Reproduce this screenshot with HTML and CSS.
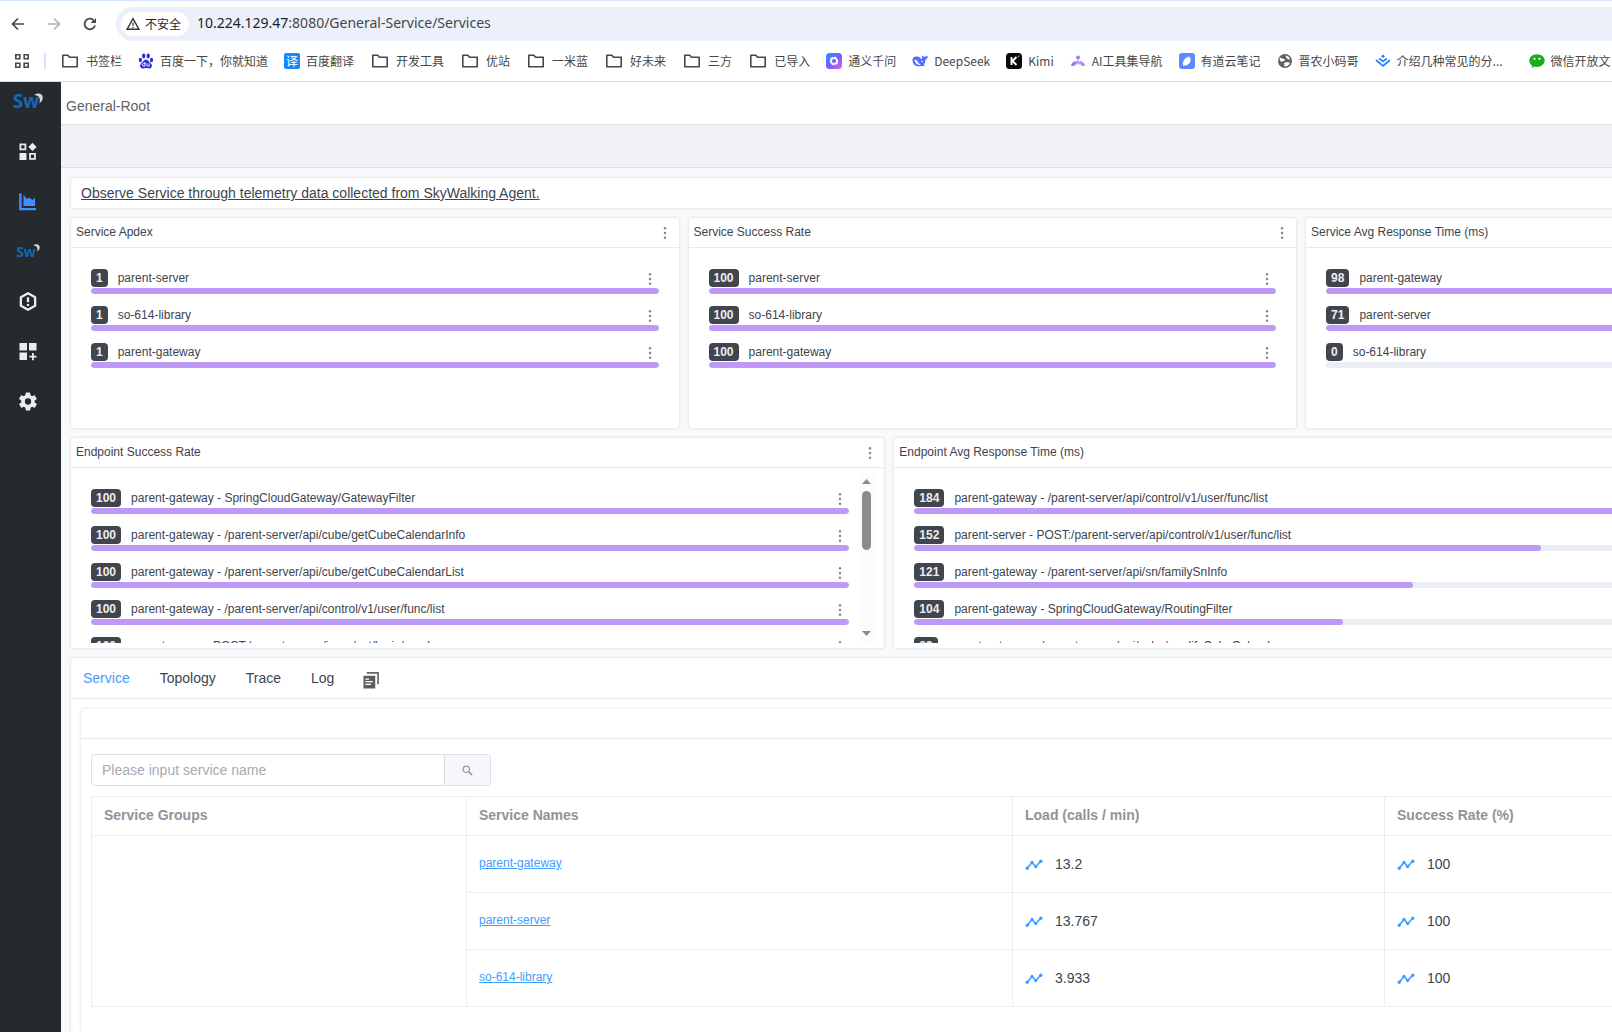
FILE: index.html
```html
<!DOCTYPE html>
<html lang="zh-CN">
<head>
<meta charset="utf-8">
<title>General-Root</title>
<link rel="stylesheet" href="styles.css">
</head>
<body>
<svg class="defs" aria-hidden="true">
  <symbol id="folder" viewBox="0 0 20 20"><path d="M2.800 4.200h5l1.700 2h7.700v9.600H2.800z" fill="none" stroke="#474747" stroke-width="1.600" stroke-linejoin="round"/></symbol>
  <symbol id="dots" viewBox="0 0 16 16"><g fill="#85888e"><circle cx="8" cy="2.600" r="1.400"/><circle cx="8" cy="8" r="1.400"/><circle cx="8" cy="13.400" r="1.400"/></g></symbol>
  <symbol id="line" viewBox="0 0 18 18"><path d="M2 13.500L7 7.500l3.700 4L16 6" fill="none" stroke="#409eff" stroke-width="1.700"/><g fill="#409eff"><circle cx="2.200" cy="13.200" r="1.700"/><circle cx="7" cy="7.400" r="1.600"/><circle cx="10.700" cy="11.600" r="1.600"/><circle cx="15.800" cy="6.200" r="1.700"/></g></symbol>
  <symbol id="moon" viewBox="0 0 10 12"><path d="M0 2.200C4-1 9.500 0 9.800 5c0 3-1.800 5-4 6.500C7.500 7 6.500 2.500 0 2.200z" fill="#d9dadb"/></symbol>
</svg>

<header class="browser">
  <div class="toolbar">
    <button class="nav-btn" aria-label="Back"><svg width="16" height="16" viewBox="0 0 16 16"><path d="M14 8H3M8 2.500L2.500 8 8 13.500" fill="none" stroke="#474747" stroke-width="1.700"/></svg></button>
    <button class="nav-btn" aria-label="Forward"><svg width="16" height="16" viewBox="0 0 16 16"><path d="M2 8h11M8 2.500L13.500 8 8 13.500" fill="none" stroke="#b5b5b5" stroke-width="1.700"/></svg></button>
    <button class="nav-btn" aria-label="Reload"><svg width="16" height="16" viewBox="0 0 16 16"><path d="M13 9.500A5.300 5.300 0 1 1 12.300 5" fill="none" stroke="#474747" stroke-width="1.800"/><path d="M14 1.500v5.500H8.500l2-2 1.800-.2z" fill="#474747"/></svg></button>
    <div class="address">
      <span class="insecure"><svg width="14" height="14" viewBox="0 0 14 14"><path d="M7 1.700L13 12.300H1z" fill="none" stroke="#333" stroke-width="1.400"/><path d="M7 5.500v3.300M7 9.800v1.200" stroke="#333" stroke-width="1.300"/></svg>不安全</span>
      <span class="url"><b>10.224.129.47</b>:8080/General-Service/Services</span>
    </div>
  </div>
  <nav class="bookmarks">
    <button class="apps" aria-label="Apps"><svg width="14" height="14" viewBox="0 0 14 14"><g fill="none" stroke="#474747" stroke-width="1.600"><path d="M.8.8h4v4h-4zM9.200.8h4v4h-4zM.8 9.200h4v4h-4zM9.200 9.200h4v4h-4z"/></g></svg></button>
    <span class="divider"></span>
    <a href="#"><svg class="folder"><use href="#folder"/></svg>书签栏</a>
    <a href="#"><svg class="fav" viewBox="0 0 16 16"><g fill="#2c2fd8"><ellipse cx="2.400" cy="7" rx="1.600" ry="2.200"/><ellipse cx="5.700" cy="3" rx="1.700" ry="2.400"/><ellipse cx="10.200" cy="3" rx="1.700" ry="2.400"/><ellipse cx="13.500" cy="7" rx="1.600" ry="2.200"/><path d="M8 6.500c2 0 3 2.500 5 4 2 2.500.5 5-2 5-1.500 0-2-.4-3-.4s-1.500.4-3 .4c-2.500 0-4-2.500-2-5 2-1.500 3-4 5-4z"/></g><path d="M7 9v4H5.500a1.200 1.200 0 0 1 0-2.400H7M9 10.300v2.200q0 .6.700.6h1.500v-2.800" fill="none" stroke="#fff" stroke-width=".9"/></svg>百度一下，你就知道</a>
    <a href="#"><span class="fav yi">译</span>百度翻译</a>
    <a href="#"><svg class="folder"><use href="#folder"/></svg>开发工具</a>
    <a href="#"><svg class="folder"><use href="#folder"/></svg>优站</a>
    <a href="#"><svg class="folder"><use href="#folder"/></svg>一米蓝</a>
    <a href="#"><svg class="folder"><use href="#folder"/></svg>好未来</a>
    <a href="#"><svg class="folder"><use href="#folder"/></svg>三方</a>
    <a href="#"><svg class="folder"><use href="#folder"/></svg>已导入</a>
    <a href="#"><svg class="fav" viewBox="0 0 16 16"><defs><linearGradient id="ty" x1="0" y1="0" x2="1" y2="1"><stop offset="0" stop-color="#1f97ff"/><stop offset=".55" stop-color="#7a5cff"/><stop offset="1" stop-color="#e565f5"/></linearGradient></defs><rect width="16" height="16" rx="3.500" fill="url(#ty)"/><path d="M8 4.500l3 1.700v3.600l-3 1.700-3-1.700V6.200z" fill="none" stroke="#fff" stroke-width="2.200" stroke-dasharray="3 .5"/></svg>通义千问</a>
    <a href="#"><svg class="fav" viewBox="0 0 16 16"><path d="M.5 7C.5 4 3 3 5.500 3.500c2 .3 3.500 2 4.500 3 .5-1.500-.5-2.500-.3-4.300 1 1.300 2 1.500 3.300 1.500.7-.2 1.500-.8 2.700-.9 0 2.200-.7 3.200-2.200 3.600 0 2-.7 3.600-1.800 5l1 1.400c-1 .5-2.200.1-3 0C5 14.500.5 12 .5 7z" fill="#4d6bfe"/><path d="M2.500 6.500c3 0 4 5 6.500 5.200-2.500 1-6.500-1-6.500-5.200z" fill="#fff"/><circle cx="10" cy="8.500" r=".8" fill="#fff"/></svg>DeepSeek</a>
    <a href="#"><svg class="fav" viewBox="0 0 16 16"><rect width="16" height="16" rx="3.500" fill="#0b0b0b"/><path d="M5.500 4v8M10.500 4L6.500 8l4 4" fill="none" stroke="#fff" stroke-width="1.900"/><circle cx="12.600" cy="3.400" r="1" fill="#2a8bff"/></svg>Kimi</a>
    <a href="#"><svg class="fav" viewBox="0 0 16 16"><circle cx="8" cy="4.500" r="2" fill="#9c7ef2"/><path d="M5.500 9.500L8 6.500l2.500 3v3L8 10.500l-2.500 2z" fill="#c79bf0"/><path d="M1 13c0-2.500 2-4.500 4.500-5l1 1.500-2.500 3.500z" fill="#8c7cf5"/><path d="M15 13c0-2.500-2-4.500-4.500-5l-1 1.500 2.500 3.500z" fill="#b48af0"/></svg>AI工具集导航</a>
    <a href="#"><svg class="fav" viewBox="0 0 16 16"><rect width="16" height="16" rx="3" fill="#5b8bff"/><path d="M4 12.500c-.5-4 1-7.500 6-9 2.500 2 2 5.500-.5 7.500C8 12.200 6 12.700 4 12.500z" fill="#fff"/></svg>有道云笔记</a>
    <a href="#"><svg class="fav" viewBox="0 0 16 16"><circle cx="8" cy="8" r="7" fill="#5f6368"/><path d="M3 4.500C5 6 8 5.500 8 7c0 1.300-2.500.7-3 2-2-1-3-2.500-2-4.500zM8.500 2.500c2 .3 4 1.500 4.500 3.500-2 1.300-4-.7-4.500-3.500zM7 10c2-1.300 5-1 6 0-1 2.500-3 3.500-5.500 3.500z" fill="#fff"/></svg>晋农小码哥</a>
    <a href="#"><svg class="fav" viewBox="0 0 16 16"><g fill="none" stroke="#1e80ff" stroke-width="1.700"><path d="M1 7l7 5.800L15 7M4.200 5.500L8 8.500l3.800-3"/></g><path d="M8 1.500l2 1.700-2 1.700-2-1.700z" fill="#1e80ff"/></svg><span class="cut">介绍几种常见的分...</span></a>
    <a href="#"><svg class="fav" viewBox="0 0 16 16"><path d="M8 1.200c4.200 0 7.700 2.800 7.700 6.300 0 3.600-3.500 6.400-7.700 6.400-1 0-1.900-.1-2.700-.4L3 15l.3-2.300C1.500 11.500.3 9.700.3 7.500.3 4 3.800 1.200 8 1.200z" fill="#1aad19"/><circle cx="5.500" cy="5.800" r="1.100" fill="#fff"/><circle cx="10.500" cy="5.800" r="1.100" fill="#fff"/></svg>微信开放文</a>
  </nav>
</header>

<div class="app">
  <aside class="sidebar">
    <a class="logo" href="#" aria-label="SkyWalking">Sw<svg><use href="#moon"/></svg></a>
    <a class="side-item" href="#" aria-label="Marketplace"><svg viewBox="0 0 18 18"><g fill="none" stroke="#ececec" stroke-width="1.800"><path d="M1.400 1.900h5v5h-5zM11 11.400h5v5h-5z"/></g><path d="M.5 10.500h7v7h-7zM13.500.2l4.200 4.200-4.200 4.200-4.200-4.200z" fill="#ececec"/></svg></a>
    <a class="side-item" href="#" aria-label="General Service"><svg viewBox="0 0 18 18"><path d="M1.400.8v15.800H17" fill="none" stroke="#448dfe" stroke-width="2.400"/><path d="M4.500 13.500V2.500l3.500 4 2-1.500 3.500 2.500L16 5v8.500z" fill="#448dfe"/></svg></a>
    <a class="side-item small-logo" href="#" aria-label="Self Observability">Sw<svg><use href="#moon"/></svg></a>
    <a class="side-item" href="#" aria-label="Alerting"><svg viewBox="0 0 18 20"><path d="M9 1.300l7.500 4.300v8.800L9 18.700l-7.500-4.300V5.600z" fill="none" stroke="#ececec" stroke-width="2.400" stroke-linejoin="round"/><path d="M9 5.500v5.300M9 12.500v2.200" stroke="#ececec" stroke-width="2.400"/></svg></a>
    <a class="side-item" href="#" aria-label="Dashboards"><svg viewBox="0 0 18 18"><path d="M.5.500h7.500v7.500H.5zM10 .5h7.500v7.500H10zM.5 10h7.500v7.500H.5zM13 10.500h1.800v2.700h2.700V15h-2.700v2.700H13V15h-2.700v-1.800H13z" fill="#ececec"/></svg></a>
    <a class="side-item" href="#" aria-label="Settings"><svg viewBox="2 2 20 20"><path d="M19.400 13a7.800 7.800 0 0 0 0-2l2.100-1.600a.5.500 0 0 0 .1-.6l-2-3.500a.5.500 0 0 0-.6-.2l-2.500 1a7.300 7.300 0 0 0-1.700-1l-.4-2.600a.5.500 0 0 0-.5-.5h-4a.5.500 0 0 0-.5.500L9 5.100a7.700 7.700 0 0 0-1.700 1l-2.500-1a.5.500 0 0 0-.6.200l-2 3.500a.5.500 0 0 0 .1.600L4.500 11a8 8 0 0 0 0 2l-2.100 1.600a.5.500 0 0 0-.1.600l2 3.500c.1.200.4.300.6.200l2.500-1c.5.400 1.100.7 1.700 1l.4 2.600c0 .3.200.5.500.5h4c.2 0 .5-.2.500-.5l.4-2.600a7.300 7.300 0 0 0 1.700-1l2.500 1c.2.100.5 0 .6-.2l2-3.500a.5.500 0 0 0-.1-.6zM12 15.500a3.500 3.500 0 1 1 0-7 3.500 3.500 0 0 1 0 7z" fill="#ececec"/></svg></a>
  </aside>

  <main class="main">
    <h1 class="page-title">General-Root</h1>
    <div class="tool-strip"></div>
    <div class="dashboard">
      <p class="card note">Observe Service through telemetry data collected from SkyWalking Agent.</p>

      <section class="card widget w3">
        <header><h2>Service Apdex</h2><button class="more" aria-label="More"><svg><use href="#dots"/></svg></button></header>
        <div class="body"><ul class="list">
          <li><span class="badge">1</span><span class="label">parent-server</span><button class="more" aria-label="More"><svg><use href="#dots"/></svg></button><div class="bar"><i style="width:100%"></i></div></li>
          <li><span class="badge">1</span><span class="label">so-614-library</span><button class="more" aria-label="More"><svg><use href="#dots"/></svg></button><div class="bar"><i style="width:100%"></i></div></li>
          <li><span class="badge">1</span><span class="label">parent-gateway</span><button class="more" aria-label="More"><svg><use href="#dots"/></svg></button><div class="bar"><i style="width:100%"></i></div></li>
        </ul></div>
      </section>

      <section class="card widget w3">
        <header><h2>Service Success Rate</h2><button class="more" aria-label="More"><svg><use href="#dots"/></svg></button></header>
        <div class="body"><ul class="list">
          <li><span class="badge">100</span><span class="label">parent-server</span><button class="more" aria-label="More"><svg><use href="#dots"/></svg></button><div class="bar"><i style="width:100%"></i></div></li>
          <li><span class="badge">100</span><span class="label">so-614-library</span><button class="more" aria-label="More"><svg><use href="#dots"/></svg></button><div class="bar"><i style="width:100%"></i></div></li>
          <li><span class="badge">100</span><span class="label">parent-gateway</span><button class="more" aria-label="More"><svg><use href="#dots"/></svg></button><div class="bar"><i style="width:100%"></i></div></li>
        </ul></div>
      </section>

      <section class="card widget w3">
        <header><h2>Service Avg Response Time (ms)</h2></header>
        <div class="body"><ul class="list">
          <li><span class="badge">98</span><span class="label">parent-gateway</span><div class="bar"><i style="width:100%"></i></div></li>
          <li><span class="badge">71</span><span class="label">parent-server</span><div class="bar"><i style="width:72.4%"></i></div></li>
          <li><span class="badge">0</span><span class="label">so-614-library</span><div class="bar"></div></li>
        </ul></div>
      </section>

      <section class="card widget w4 row-start">
        <header><h2>Endpoint Success Rate</h2><button class="more" aria-label="More"><svg><use href="#dots"/></svg></button></header>
        <div class="body"><ul class="list">
          <li><span class="badge">100</span><span class="label">parent-gateway - SpringCloudGateway/GatewayFilter</span><button class="more" aria-label="More"><svg><use href="#dots"/></svg></button><div class="bar"><i style="width:100%"></i></div></li>
          <li><span class="badge">100</span><span class="label">parent-gateway - /parent-server/api/cube/getCubeCalendarInfo</span><button class="more" aria-label="More"><svg><use href="#dots"/></svg></button><div class="bar"><i style="width:100%"></i></div></li>
          <li><span class="badge">100</span><span class="label">parent-gateway - /parent-server/api/cube/getCubeCalendarList</span><button class="more" aria-label="More"><svg><use href="#dots"/></svg></button><div class="bar"><i style="width:100%"></i></div></li>
          <li><span class="badge">100</span><span class="label">parent-gateway - /parent-server/api/control/v1/user/func/list</span><button class="more" aria-label="More"><svg><use href="#dots"/></svg></button><div class="bar"><i style="width:100%"></i></div></li>
          <li><span class="badge">100</span><span class="label">parent-server - POST:/parent-server/inner/act/login/send</span><button class="more" aria-label="More"><svg><use href="#dots"/></svg></button><div class="bar"><i style="width:100%"></i></div></li>
        </ul>
        <div class="scroll"><svg viewBox="0 0 9 5"><path d="M0 5L4.500 0 9 5z"/></svg><span class="thumb"></span><svg viewBox="0 0 9 5"><path d="M0 0h9L4.500 5z"/></svg></div></div>
      </section>

      <section class="card widget w4">
        <header><h2>Endpoint Avg Response Time (ms)</h2></header>
        <div class="body"><ul class="list">
          <li><span class="badge">184</span><span class="label">parent-gateway - /parent-server/api/control/v1/user/func/list</span><div class="bar"><i style="width:100%"></i></div></li>
          <li><span class="badge">152</span><span class="label">parent-server - POST:/parent-server/api/control/v1/user/func/list</span><div class="bar"><i style="width:82.6%"></i></div></li>
          <li><span class="badge">121</span><span class="label">parent-gateway - /parent-server/api/sn/familySnInfo</span><div class="bar"><i style="width:65.7%"></i></div></li>
          <li><span class="badge">104</span><span class="label">parent-gateway - SpringCloudGateway/RoutingFilter</span><div class="bar"><i style="width:56.5%"></i></div></li>
          <li><span class="badge">89</span><span class="label">parent-gateway - /parent-server/api/cube/modifyCubeCalendar</span><div class="bar"><i style="width:48.4%"></i></div></li>
        </ul>
        <div class="scroll"></div></div>
      </section>

      <section class="card tabs-card">
        <nav class="tabs">
          <a class="active" href="#">Service</a><a href="#">Topology</a><a href="#">Trace</a><a href="#">Log</a>
          <button aria-label="Copy link"><svg width="16" height="17" viewBox="0 0 17 18"><path d="M4 1h12v12" fill="none" stroke="#666" stroke-width="1.800"/><path d="M.5 4H13v13.500H.5z" fill="#5c5c5c"/><path d="M2.500 7.500h4M2.500 10.200h8M2.500 13h6" stroke="#fff" stroke-width="1.300"/></svg></button>
        </nav>
        <div class="tab-panel">
          <section class="card inner">
            <header></header>
            <div class="inner-body">
              <form class="search">
                <input type="text" placeholder="Please input service name" aria-label="Service name">
                <button type="button" aria-label="Search"><svg width="11" height="11" viewBox="0 0 12 12"><circle cx="4.700" cy="4.700" r="3.500" fill="none" stroke="#909399" stroke-width="1.300"/><path d="M7.300 7.300L11 11" stroke="#909399" stroke-width="1.700"/></svg></button>
              </form>
              <table class="services">
                <colgroup><col class="c-group"><col class="c-name"><col class="c-load"><col></colgroup>
                <thead><tr><th>Service Groups</th><th>Service Names</th><th>Load (calls / min)</th><th>Success Rate (%)</th></tr></thead>
                <tbody>
                  <tr><td rowspan="3"></td><td><a href="#">parent-gateway</a></td><td><span class="metric"><svg><use href="#line"/></svg>13.2</span></td><td><span class="metric"><svg><use href="#line"/></svg>100</span></td></tr>
                  <tr><td><a href="#">parent-server</a></td><td><span class="metric"><svg><use href="#line"/></svg>13.767</span></td><td><span class="metric"><svg><use href="#line"/></svg>100</span></td></tr>
                  <tr><td><a href="#">so-614-library</a></td><td><span class="metric"><svg><use href="#line"/></svg>3.933</span></td><td><span class="metric"><svg><use href="#line"/></svg>100</span></td></tr>
                </tbody>
              </table>
            </div>
          </section>
        </div>
      </section>
    </div>
  </main>
</div>
</body>
</html>
```
FILE: styles.css
```css
* { box-sizing: border-box; }
body {
  margin: 0;
  height: 100vh;
  display: flex;
  flex-direction: column;
  overflow: hidden;
  font-family: "Liberation Sans", Arial, sans-serif;
  font-size: 14px;
  color: #3d444f;
  background: #fff;
}
button { border: 0; padding: 0; background: none; display: flex; align-items: center; justify-content: center; }
h1, h2, p, ul { margin: 0; padding: 0; font-weight: 400; list-style: none; }
svg { display: block; flex: none; }
.defs { position: absolute; width: 0; height: 0; }

/* Browser chrome */
.browser { border-top: 1px solid #d3e3fd; border-bottom: 1px solid #dcdee2; flex: none; overflow: hidden; }
.toolbar { display: flex; align-items: center; gap: 20px; padding: 6px 0 0 10px; }
.nav-btn { width: 16px; height: 34px; }
.address {
  flex: 1;
  height: 34px;
  margin-left: -2px;
  padding-left: 5px;
  display: flex;
  align-items: center;
  gap: 8px;
  background: #ebf0fa;
  border-radius: 17px 0 0 17px;
}
.insecure {
  height: 24px;
  padding: 0 8px 0 5px;
  display: flex;
  align-items: center;
  gap: 5px;
  border-radius: 12px;
  background: #fff;
  color: #1f1f1f;
  font: 12px/24px "Noto Sans CJK SC", sans-serif;
}
.url { font: 14px/22px "Noto Sans", sans-serif; color: #474747; padding-bottom: 2px; }
.url b { font-weight: 400; color: #1f1f1f; }
.bookmarks {
  height: 40px;
  padding-left: 15px;
  display: flex;
  align-items: center;
  gap: 16px;
  white-space: nowrap;
}
.bookmarks a {
  display: flex;
  align-items: center;
  gap: 6px;
  flex: none;
  color: #474747;
  text-decoration: none;
  font: 12px/20px "Noto Sans CJK SC", sans-serif;
}
.bookmarks .divider { flex: none; width: 2px; height: 16px; background: #d3e3fd; margin: 0 -2px 0 -1px; }
.folder { width: 20px; height: 20px; }
.fav { width: 16px; height: 16px; }
.yi { border-radius: 2px; background: #1787fb; color: #fff; text-align: center; line-height: 16px; }
.cut { width: 116px; }

/* Application shell */
.app { flex: 1; min-height: 0; display: flex; }
.sidebar { flex: none; width: 61px; padding-right: 5px; background: #252a2f; display: flex; flex-direction: column; }
.logo, .side-item { display: flex; align-items: center; justify-content: center; height: 50px; text-decoration: none; }
.side-item svg { width: 18px; height: 19px; }
.logo, .small-logo { color: #1368b3; font-family: "Open Sans", sans-serif; font-weight: 700; }
.logo { height: 44px; padding-bottom: 6px; font-size: 19px; }
.small-logo { font-size: 14px; }
.logo svg { width: 9px; height: 11px; margin: -6px 0 0 -5px; }
.side-item.small-logo svg { width: 7px; height: 8px; margin: -6px 0 0 -3px; }

.main { flex: 1; min-width: 0; overflow: hidden; background: #f7f9fa; display: flex; flex-direction: column; }
.page-title { padding: 0 5px; font-size: 14px; line-height: 48px; height: 43px; color: #606266; background: #fff; border-bottom: 1px solid #dcdfe6; flex: none; }
.tool-strip { height: 43px; background: #f0f2f5; border-bottom: 1px solid #dcdfe6; flex: none; }

/* The dashboard is wider than the window and runs off to the right */
.dashboard {
  flex: 1;
  width: 159.9%;
  padding: 10px 10px 0;
  display: grid;
  grid-template-columns: repeat(12, minmax(0, 1fr));
  grid-template-rows: 30px 210px 210px minmax(374px, 1fr);
  gap: 10px;
}
.card { background: #fff; border-radius: 3px; box-shadow: 0 0 2px 1px rgba(0, 0, 0, 0.08); }
.note { grid-column: 1 / -1; padding: 0 10px; line-height: 30px; text-decoration: underline; }
.w3 { grid-column: span 3; }
.w4 { grid-column: span 4; }
.row-start { grid-column: 1 / span 4; }
.widget { min-height: 0; display: flex; flex-direction: column; }
.widget > header { height: 30px; flex: none; padding: 0 5px; display: flex; justify-content: space-between; align-items: center; border-bottom: 1px solid #e9eaec; }
.widget h2 { font-size: 12px; line-height: 26px; padding-bottom: 2px; }
.more { width: 18px; height: 18px; }
.more svg { width: 14px; height: 14px; }
.list .more { padding-top: 2px; }
.body { flex: 1; min-height: 0; display: flex; padding: 5px 10px; }
.list { flex: 1; overflow: hidden; padding: 16px 10px 0; font-size: 12px; }
.list li { display: grid; grid-template-columns: auto 1fr auto; align-items: center; row-gap: 1px; height: 25px; margin-bottom: 12px; }
.badge { padding: 0 5px; line-height: 18px; border-radius: 4px; background: #40454e; color: #eee; font-weight: 700; }
.label { padding-left: 10px; line-height: 18px; white-space: nowrap; }
.bar { grid-column: 1 / -1; height: 6px; border-radius: 3px; background: #ebeef5; overflow: hidden; }
.bar i { display: block; height: 6px; border-radius: 3px; background: #bf99f8; }
.scroll { width: 15px; flex: none; padding: 6px 3px 7px; background: #fcfcfc; display: flex; flex-direction: column; align-items: center; }
.scroll svg { width: 9px; height: 5px; fill: #8b8b8b; }
.scroll .thumb { width: 9px; height: 59px; margin: 7px 0 auto; border-radius: 5px; background: #8b8b8b; }

.tabs-card { grid-column: 1 / -1; min-width: 0; display: flex; flex-direction: column; }
.tabs { height: 41px; flex: none; padding: 0 12px; display: flex; align-items: center; gap: 30px; border-bottom: 1px solid #e9eaec; }
.tabs a { color: inherit; text-decoration: none; line-height: 40px; }
.tabs a.active { color: #409eff; }
.tabs button { padding-top: 4px; margin-left: -1px; }
.tab-panel { flex: 1; padding: 10px 10px 0; display: flex; }
.inner { flex: 1; min-width: 0; }
.inner > header { height: 30px; border-bottom: 1px solid #e9eaec; }
.inner-body { padding: 15px 10px; }
.search { width: 400px; height: 32px; display: flex; border: 1px solid #dcdfe6; border-radius: 4px; overflow: hidden; }
.search input { flex: 1; min-width: 0; border: 0; padding: 0 10px; font: inherit; color: inherit; background: #fff; }
.search input::placeholder { color: #a8abb2; }
.search button { width: 46px; background: #f5f7fa; border-left: 1px solid #dcdfe6; }
.services { width: 100%; margin-top: 10px; table-layout: fixed; border-collapse: collapse; }
.services th, .services td { border: 1px solid #ebeef5; padding: 0 12px; text-align: left; }
.services th { height: 39px; padding-bottom: 2px; color: #909399; font-weight: 700; }
.services td { height: 57px; }
.services td a { display: block; padding-bottom: 2px; color: #409eff; font-size: 12px; }
.c-group { width: 375px; }
.c-name { width: 546px; }
.c-load { width: 372px; }
.metric { display: flex; align-items: center; gap: 12px; }
.metric svg { width: 18px; height: 18px; }
```
